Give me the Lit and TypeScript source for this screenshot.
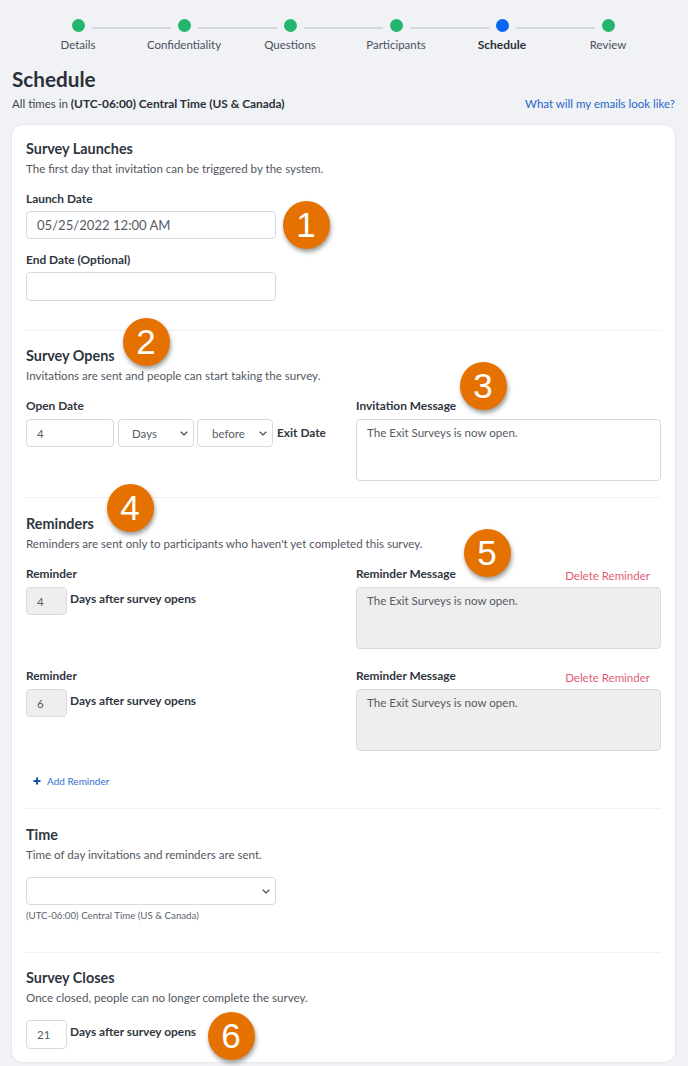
import { LitElement, html, css } from "lit";
import { customElement } from "lit/decorators.js";

const steps = ["Details", "Confidentiality", "Questions", "Participants", "Schedule", "Review"];
const badges = [
  { n: 1, x: 306, y: 225 },
  { n: 2, x: 146, y: 342 },
  { n: 3, x: 483, y: 386 },
  { n: 4, x: 130, y: 508 },
  { n: 5, x: 487, y: 553 },
  { n: 6, x: 231, y: 1036 },
];

@customElement("app-root")
export class AppRoot extends LitElement {
  static styles = css`
    :host { display: block; width: 688px; height: 1066px; overflow: hidden; background: #f0f2f6; font-family: Lato, "Liberation Sans", sans-serif; color: #2f3640; }
    * { box-sizing: border-box; }
    .dots { display: flex; align-items: center; padding: 19px 0 0 72px; height: 32px; }
    .dot { width: 13px; height: 13px; border-radius: 50%; background: #25b66e; flex: none; }
    .dot.cur { background: #0a66f0; }
    .line { width: 79px; height: 2px; margin: 4px 7px 0; background: #d4d7dc; flex: none; }
    .labels { display: grid; grid-template-columns: repeat(6, 106px); padding: 6px 0 0 25px; font-size: 11.5px; line-height: 14px; color: #4a505a; text-align: center; }
    .labels .cur { font-weight: 700; font-size: 12px; color: #2b3038; }
    h1 { margin: 14px 0 0 12px; font-size: 20.7px; line-height: 26px; font-weight: 700; color: #2b3038; }
    .sub { display: flex; justify-content: space-between; padding: 5px 13px 0 12px; font-size: 11.5px; line-height: 14px; color: #3f4550; }
    .sub b { color: #2b3038; font-size: 11.9px; }
    .sub a { color: #1f66c9; }
    .card { position: absolute; left: 12px; top: 125px; width: 663px; height: 937px; background: #fff; border-radius: 11px; box-shadow: 0 0 2px rgba(90,100,120,.22); padding: 0 14px; }
    section { padding-top: 17px; border-top: 1px solid #f1f1f3; }
    section:first-child { border-top: 0; padding-top: 16px; }
    h2 { margin: 0; font-size: 14.4px; line-height: 16px; font-weight: 700; color: #2f3640; }
    .desc { margin-top: 5px; font-size: 11.55px; line-height: 14px; color: #515762; }
    label, .lab { display: block; font-size: 11.9px; line-height: 14px; font-weight: 700; color: #2f3640; }
    .mt { margin-top: 16px; }
    .f { display: block; margin-top: 5px; border: 1px solid #d5dbe6; border-radius: 4px; background-color: #fff; font-family: inherit; color: #555b64; outline: none; }
    select.f {
      appearance: none;
      background-image: url("data:image/svg+xml,%3Csvg xmlns='http://www.w3.org/2000/svg' width='8' height='5' viewBox='0 0 8 5'%3E%3Cpath d='M.7.8 4 4l3.3-3.2' fill='none' stroke='%23444a54' stroke-width='1.2'/%3E%3C/svg%3E");
      background-repeat: no-repeat;
      background-position: right 5px center;
    }
    .wide { width: 250px; height: 28px; padding: 0 10px; font-size: 13.1px; }
    .rows { display: grid; grid-template-columns: 330px 305px; }
    .inl { display: flex; align-items: flex-start; margin-top: 6px; }
    .inl .f { margin-top: 0; height: 28px; font-size: 11.5px; padding: 0 10px; }
    .n { width: 88px; }
    .s1 { width: 76px; margin-left: 4px !important; padding: 0 0 0 13px !important; }
    .s2 { width: 76px; margin-left: 3px !important; padding: 0 0 0 14px !important; }
    .tail { margin: 7px 0 0 4px; font-size: 11.9px; line-height: 14px; font-weight: 700; }
    .sm { width: 41px; padding: 0 10px !important; }
    .dis { background-color: #eeeeee; }
    textarea.f { width: 305px; height: 62px; margin-top: 6px; padding: 6px 10px; font-size: 11.55px; line-height: 14px; resize: none; }
    .head { display: flex; justify-content: space-between; height: 14px; }
    .del { font-size: 11.5px; line-height: 14px; color: #df5c74; margin: 2px 11px 0 0; }
    .add { display: flex; align-items: center; gap: 6px; margin: 23px 0 20px 7px; font-size: 10px; line-height: 14px; color: #2f6fd0; }
    .help { margin-top: 4px; font-size: 9.7px; line-height: 12px; color: #5c626c; }
    .badge { position: absolute; width: 47px; height: 48px; margin: -24px 0 0 -23.5px; border-radius: 50%; background: #e57200; color: #fff; display: flex; align-items: center; justify-content: center; font-family: "Liberation Sans", sans-serif; font-size: 35px; box-shadow: 1px 3px 4px rgba(60,60,60,.5); }
  `;

  reminder(v: string, first: boolean) {
    return html`<div class="rows" style=${first ? "" : "margin-top:20px"}>
      <div>
        <span class="lab">Reminder</span>
        <div class="inl"><input class="f sm dis" .value=${v} /><span class="tail" style="margin-top:5px;margin-left:3px">Days after survey opens</span></div>
      </div>
      <div>
        <div class="head"><span class="lab">Reminder Message</span><span class="del">Delete Reminder</span></div>
        <textarea class="f dis" .value=${"The Exit Surveys is now open."}></textarea>
      </div>
    </div>`;
  }

  render() {
    return html`
      <div class="dots">
        ${steps.map((s, i) => html`<span class="dot ${s === "Schedule" ? "cur" : ""}"></span>${i < 5 ? html`<span class="line"></span>` : ""}`)}
      </div>
      <div class="labels">${steps.map((s) => html`<span class=${s === "Schedule" ? "cur" : ""}>${s}</span>`)}</div>
      <h1>Schedule</h1>
      <div class="sub"><span>All times in <b>(UTC-06:00) Central Time (US &amp; Canada)</b></span><a>What will my emails look like?</a></div>
      <div class="card">
        <section style="padding-bottom:29px">
          <h2>Survey Launches</h2>
          <div class="desc">The first day that invitation can be triggered by the system.</div>
          <label class="mt">Launch Date</label>
          <input class="f wide" .value=${"05/25/2022 12:00 AM"} />
          <label style="margin-top:14px">End Date (Optional)</label>
          <input class="f wide" style="height:29px" />
        </section>
        <section style="padding-bottom:16px">
          <h2>Survey Opens</h2>
          <div class="desc">Invitations are sent and people can start taking the survey.</div>
          <div class="rows mt">
            <div>
              <label>Open Date</label>
              <div class="inl">
                <input class="f n" .value=${"4"} />
                <select class="f s1"><option>Days</option></select>
                <select class="f s2"><option>before</option></select>
                <span class="tail">Exit Date</span>
              </div>
            </div>
            <div>
              <label>Invitation Message</label>
              <textarea class="f" .value=${"The Exit Surveys is now open."}></textarea>
            </div>
          </div>
        </section>
        <section>
          <h2 style="margin-top:1px">Reminders</h2>
          <div class="desc">Reminders are sent only to participants who haven't yet completed this survey.</div>
          <div class="mt">
            ${this.reminder("4", true)}
            ${this.reminder("6", false)}
          </div>
          <div class="add">
            <svg width="8" height="8" viewBox="0 0 8 8"><path d="M4 .5v7M.5 4h7" stroke="#1552b0" stroke-width="2"/></svg>
            <span>Add Reminder</span>
          </div>
        </section>
        <section style="padding-bottom:31px">
          <h2 style="margin-top:1px">Time</h2>
          <div class="desc">Time of day invitations and reminders are sent.</div>
          <select class="f wide" style="margin-top:15px"><option></option></select>
          <div class="help">(UTC-06:00) Central Time (US &amp; Canada)</div>
        </section>
        <section>
          <h2>Survey Closes</h2>
          <div class="desc">Once closed, people can no longer complete the survey.</div>
          <div class="inl" style="margin-top:15px">
            <input class="f sm" style="height:29px" .value=${"21"} />
            <span class="tail" style="margin-top:5px;margin-left:3px">Days after survey opens</span>
          </div>
        </section>
      </div>
      ${badges.map((b) => html`<div class="badge" style="left:${b.x}px;top:${b.y}px">${b.n}</div>`)}
    `;
  }
}
